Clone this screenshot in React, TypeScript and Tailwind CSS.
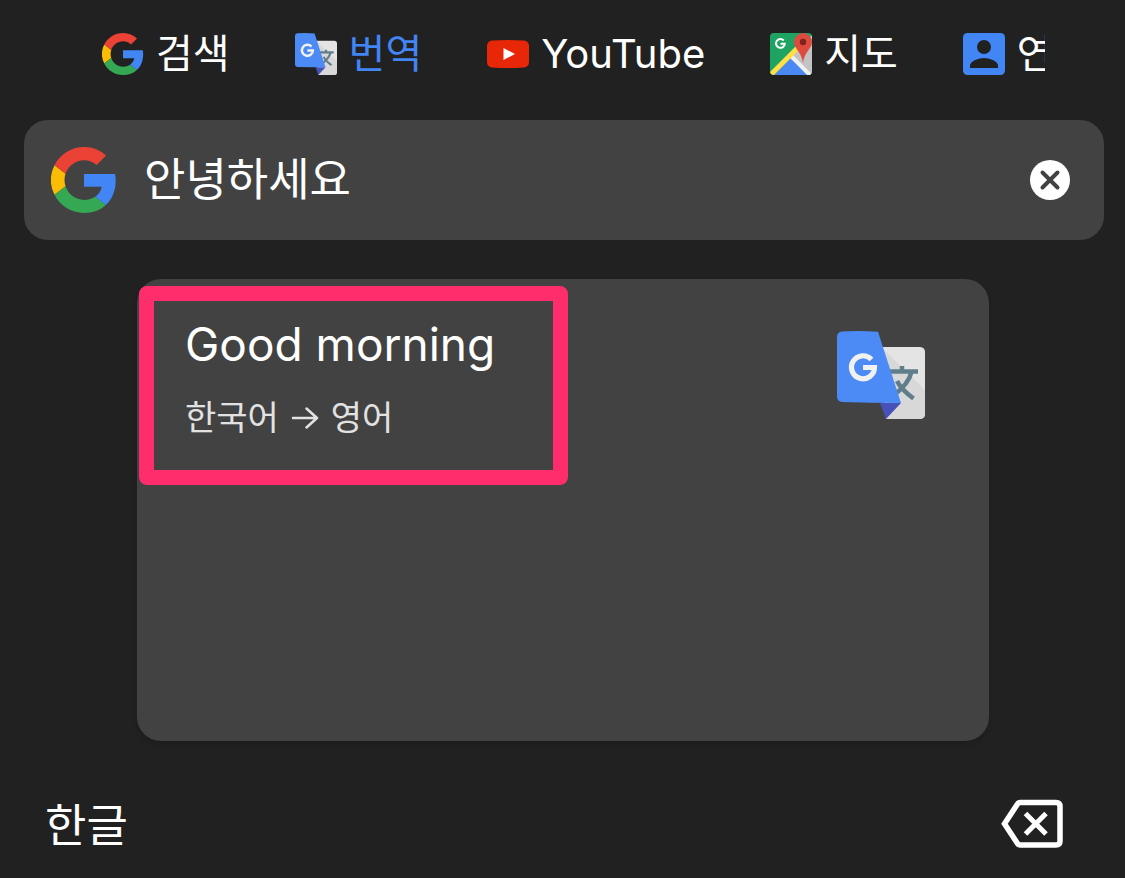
import type { ReactNode } from "react";

function GoogleLogo({ className }: { className: string }) {
  return (
    <svg viewBox="2 2 44 44" className={className} aria-hidden="true">
      <path fill="#FBBC05" d="M11.7 28.2A13 13 0 0 1 11.7 19.9L4.34 14.12A22 22 0 0 0 4.34 33.88Z" />
      <path fill="#EA4335" d="M24 10.75c3.23 0 6.13 1.11 8.41 3.29l6.31-6.31C34.91 4.18 29.93 2 24 2 15.4 2 7.96 6.93 4.34 14.12l7.35 5.7c1.73-5.2 6.58-9.07 12.31-9.07z" />
      <path fill="#34A853" d="M24 46c5.94 0 10.92-1.97 14.56-5.33l-7.11-5.52c-1.97 1.32-4.49 2.1-7.45 2.1-5.73 0-10.58-3.87-12.31-9.07l-7.35 5.7C7.96 41.07 15.4 46 24 46z" />
      <path fill="#4285F4" d="M45.12 24.5c0-1.56-.14-3.06-.4-4.5H24v8.51h11.84c-.51 2.75-2.06 5.08-4.39 6.64l7.11 5.52c4.16-3.83 6.56-9.47 6.56-16.17z" />
    </svg>
  );
}

function TranslateLogo({ className }: { className: string }) {
  return (
    <svg viewBox="0 0 88 88" className={className} aria-hidden="true">
      <path fill="#e4e4e4" d="M42 16h41q5 .5 5 5v62q0 4.500-5 5H49z" />
      <path fill="#d8d8d8" d="M45 17 88 59v24q0 4.500-5 5H49l15-16z" />
      <path
        d="M52 40.500h29M65 35v6M74.500 41c-2 8-7.500 15.500-17.500 23M60 50c3 6 9 12 16.500 17.500"
        fill="none"
        stroke="#607d8b"
        strokeWidth="4.500"
      />
      <path fill="#4652b8" d="M43 72h21L49 88z" />
      <path fill="#4c8bf5" d="M5 .5Q23-.5 41 .8L64 72Q34 72 5 71q-4.500-.5-5-5V6q0-5 5-5.500z" />
      <path
        d="M34.500 28.500A11.500 11.500 0 1 0 37.500 36.500H26"
        fill="none"
        stroke="#f1f1f1"
        strokeWidth="5.200"
      />
    </svg>
  );
}

function YouTubeLogo() {
  return (
    <svg viewBox="0 0 42 42" className="size-[42px] shrink-0" aria-hidden="true">
      <path fill="#e82608" d="M5 7.500q16-1 32 0 4.500.4 5 5 .5 8.500 0 17-.5 4.600-5 5-16 1-32 0-4.500-.4-5-5-.5-8.500 0-17 .5-4.600 5-5z" />
      <path fill="#fff" d="M16.500 15v12l11.500-6z" />
    </svg>
  );
}

function MapsLogo() {
  return (
    <svg viewBox="0 0 42 42" className="size-[42px] shrink-0" aria-hidden="true">
      <clipPath id="maps-tile">
        <rect width="42" height="42" rx="4" />
      </clipPath>
      <g clipPath="url(#maps-tile)">
        <rect width="42" height="42" fill="#1ea362" />
        <path fill="#c4c4c4" d="M22 22 42 2v40H36z" />
        <path fill="#4a89f3" d="M3 43 21.500 24.500 40 43z" />
        <path d="M21 23 42 44" stroke="#f0f0f0" strokeWidth="4" />
        <path d="M0 42.500 29 13.500" stroke="#ffde48" strokeWidth="5" />
        <path
          d="M13.700 7.500A4.400 4.400 0 1 0 14.800 10.700H10.500"
          fill="none"
          stroke="#fff"
          strokeWidth="2"
        />
        <path fill="#dc4b3e" d="M33 0a9 9 0 0 1 9 9c0 7-7.500 9-9 21-1.500-12-9-14-9-21a9 9 0 0 1 9-9z" />
        <circle cx="33" cy="9" r="3.200" fill="#7f231c" />
      </g>
    </svg>
  );
}

function ContactsLogo() {
  return (
    <svg viewBox="0 0 42 42" className="size-[42px] shrink-0" aria-hidden="true">
      <rect width="42" height="42" rx="4.500" fill="#4285f4" />
      <circle cx="21" cy="14" r="7" fill="#212121" />
      <path fill="#212121" d="M7 35v-2.500C7 28 16 25 21 25s14 3 14 7.500V35z" />
    </svg>
  );
}

function ClearIcon() {
  return (
    <svg viewBox="0 0 40 40" className="size-10" aria-hidden="true">
      <circle cx="20" cy="20" r="20" fill="#fff" />
      <path d="M12.500 12.500l15 15M27.500 12.500l-15 15" stroke="#424242" strokeWidth="4" strokeLinecap="round" />
    </svg>
  );
}

function BackspaceIcon() {
  return (
    <svg viewBox="0 0 62 50" className="h-[50px] w-[62px]" fill="none" stroke="#fff" aria-hidden="true">
      <path d="M19 3.500h36q4 0 4 4v34.500q0 4-4 4H19q-1.500 0-2.500-1.500L3.500 24.800 16.500 5Q17.500 3.500 19 3.500z" strokeWidth="5.500" />
      <path d="M24.500 14.500l20.500 20.500M45 14.500l-20.500 20.500" strokeWidth="5" />
    </svg>
  );
}

const tabs: { label: string; icon: ReactNode; active?: boolean }[] = [
  { label: "검색", icon: <GoogleLogo className="size-[42px] shrink-0" /> },
  { label: "번역", icon: <TranslateLogo className="size-[42px] shrink-0" />, active: true },
  { label: "YouTube", icon: <YouTubeLogo /> },
  { label: "지도", icon: <MapsLogo /> },
  { label: "연락처", icon: <ContactsLogo /> },
];

export default function App() {
  return (
    <div className="flex min-h-screen flex-col bg-[#212121] font-['Inter','Noto_Sans_CJK_KR',sans-serif] text-white">
      {/* service tabs */}
      <nav className="mr-20 ml-[102px] flex h-[108px] items-center gap-[65px] overflow-hidden">
        {tabs.map((tab) => (
          <button
            key={tab.label}
            type="button"
            className={`flex shrink-0 items-center gap-3 text-[40px] leading-[56px] whitespace-nowrap ${
              tab.active ? "text-[#4285f4]" : "text-white"
            }`}
          >
            {tab.icon}
            {tab.label}
          </button>
        ))}
      </nav>

      {/* search box */}
      <form className="mt-3 mr-[21px] ml-6 flex h-[120px] items-center rounded-3xl bg-[#424242] pr-[34px] pl-[27px]">
        <GoogleLogo className="size-[66px] shrink-0" />
        <input
          type="text"
          aria-label="번역할 텍스트"
          defaultValue="안녕하세요"
          className="ml-[27px] h-20 min-w-0 flex-1 bg-transparent pb-2 text-[45px] outline-none"
        />
        <button type="button" aria-label="지우기">
          <ClearIcon />
        </button>
      </form>

      {/* translation result */}
      <main className="relative mr-[136px] ml-[137px] mt-[39px] flex h-[462px] items-start justify-between rounded-3xl bg-[#424242] pt-[35px] pr-16 pl-12 shadow-md">
        <div>
          <h1 className="text-[46px] leading-[60px]">Good morning</h1>
          <p className="mt-[18px] flex items-center text-[34px] leading-[52px] text-[#e2e2e2]">
            한국어
            <svg viewBox="0 0 28 22" className="mx-3 h-[22px] w-7" fill="none" stroke="currentColor" aria-label="→">
              <path d="M2 11h24M15.500 1.500l10.500 9.500-10.500 9.500" strokeWidth="2.500" strokeLinecap="round" strokeLinejoin="round" />
            </svg>
            영어
          </p>
        </div>
        <TranslateLogo className="mt-[17px] size-[88px]" />
        {/* highlight frame */}
        <div className="pointer-events-none absolute top-[7px] left-[2px] h-[199px] w-[429px] rounded-lg border-[15px] border-[#ff2d6b]" />
      </main>

      {/* keyboard row */}
      <footer className="mt-[43px] flex h-20 items-center justify-between pr-[62px] pl-[45px]">
        <button type="button" className="pt-1 text-[45px] leading-[64px]">
          한글
        </button>
        <button type="button" aria-label="삭제">
          <BackspaceIcon />
        </button>
      </footer>
    </div>
  );
}
